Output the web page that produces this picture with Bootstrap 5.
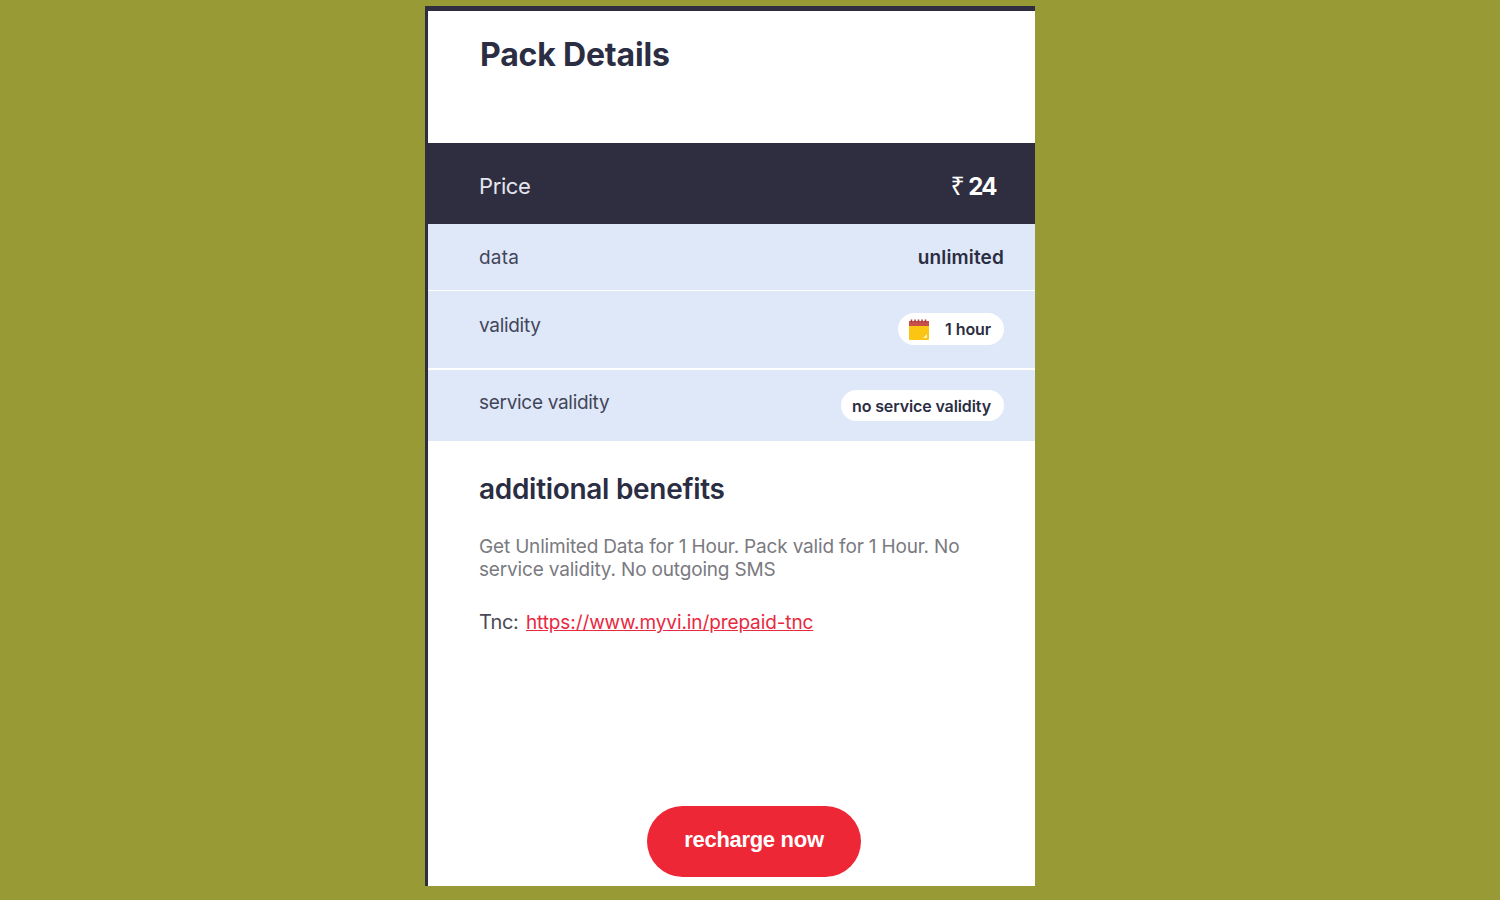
<!DOCTYPE html>
<html lang="en">
<head>
<meta charset="utf-8">
<title>Pack Details</title>
<link href="https://cdn.jsdelivr.net/npm/bootstrap@5.3.0/dist/css/bootstrap.min.css" rel="stylesheet">
<style>
html,body{height:100%;}
body{background:#979a35;font-family:Inter,"Liberation Sans",sans-serif;color:#2b2d42;overflow:hidden;}
.stage{padding:6px 0 0 425px;height:886px;}
.sheet{width:610px;height:880px;background:#fff;border-top:5px solid #2f2e41;border-left:3px solid #2f2e41;}
.sheet-head{height:132px;padding:22px 0 0 52px;}
.sheet-head h1{font-size:32px;line-height:44px;font-weight:700;letter-spacing:-.17px;color:#2b2d42;margin:0;}
.price-row{height:81px;background:#2f2e41;color:#fff;padding:6px 39px 0 51px;}
.price-row .lbl{font-size:22px;color:#e6e6ee;letter-spacing:-.4px;}
.price-row .amt{font-size:24px;font-weight:700;letter-spacing:-1.6px;line-height:28px;padding-bottom:2px;}
.price-row .rupee{font-weight:400;font-size:25px;margin-right:5px;font-family:"Noto Sans",sans-serif;}
.info-row{background:#dfe8f8;padding:0 31px 0 51px;font-size:19px;color:#43455a;letter-spacing:-.3px;}
.r-data{height:66px;padding-top:3px;}
.r-data .lbl-wide{letter-spacing:.2px;}
.r-valid{height:77px;margin-top:1px;padding-top:21px;}
.r-serv{height:71px;margin-top:2px;padding-top:19px;}
.r-data b{font-size:19px;font-weight:600;color:#2b2d42;letter-spacing:.15px;}
.chip{background:#fff;border-radius:17px;color:#2b2d42;font-weight:600;font-size:16px;letter-spacing:-.1px;height:32px;}
.chip-time{width:106px;padding:0 13px 0 10px;margin-top:1px;}
.chip-serv{width:163px;height:31px;margin-top:1px;font-size:16px;letter-spacing:-.12px;justify-content:flex-start;padding-left:11px;}
.body-pad{padding:0 0 0 51px;}
.body-pad h2{font-size:28px;line-height:36px;font-weight:600;letter-spacing:-.3px;color:#2b2d42;margin:30px 0 0;}
.desc{font-size:19px;line-height:23px;color:#7a7a80;letter-spacing:-.17px;margin:28px 0 0;width:500px;}
.tnc{font-size:20px;line-height:28px;color:#4a4a55;letter-spacing:-.3px;margin:27px 0 0;}
.tnc a{color:#e8293f;font-size:19px;letter-spacing:-.1px;margin-left:2px;}
.cta-wrap{margin-top:169px;padding-left:219px;}
.cta{width:214px;height:71px;border-radius:36px;background:#ee2737;border:0;color:#fff;font-family:"Liberation Sans",sans-serif;font-size:22px;font-weight:700;letter-spacing:-.3px;padding:0 0 5px;}
.cta:hover{background:#ee2737;color:#fff;}
</style>
</head>
<body>
<div class="stage d-flex">
  <main class="sheet d-flex flex-column">
    <header class="sheet-head"><h1>Pack Details</h1></header>
    <div class="price-row d-flex justify-content-between align-items-center">
      <span class="lbl">Price</span>
      <span class="amt"><span class="rupee">₹</span>24</span>
    </div>
    <div class="info-row r-data d-flex justify-content-between align-items-center">
      <span class="lbl-wide">data</span><b>unlimited</b>
    </div>
    <div class="info-row r-valid d-flex justify-content-between align-items-start">
      <span>validity</span>
      <span class="chip chip-time d-flex align-items-center justify-content-between">
        <svg width="22" height="22" viewBox="0 0 22 22" aria-hidden="true">
          <rect x="1" y="3" width="20" height="19" rx="1" fill="#fdc513"/>
          <rect x="1" y="3" width="20" height="5" fill="#c9504a"/>
          <path d="M3.5 1.5v3M7 1.500v3M10.500 1.500v3M14 1.500v3M17.500 1.500v3" stroke="#a83a3a" stroke-width="1.500"/>
          <path d="M15 20l4-4v4z" fill="#fff3c4"/>
        </svg>
        <span>1 hour</span>
      </span>
    </div>
    <div class="info-row r-serv d-flex justify-content-between align-items-start">
      <span>service validity</span>
      <span class="chip chip-serv d-flex align-items-center">no service validity</span>
    </div>
    <section class="body-pad">
      <h2>additional benefits</h2>
      <p class="desc">Get Unlimited Data for 1 Hour. Pack valid for 1 Hour. No service validity. No outgoing SMS</p>
      <p class="tnc">Tnc: <a href="#">https://www.myvi.in/prepaid-tnc</a></p>
    </section>
    <div class="cta-wrap"><button type="button" class="btn cta">recharge now</button></div>
  </main>
</div>
<script src="https://cdn.jsdelivr.net/npm/bootstrap@5.3.0/dist/js/bootstrap.bundle.min.js"></script>
</body>
</html>
